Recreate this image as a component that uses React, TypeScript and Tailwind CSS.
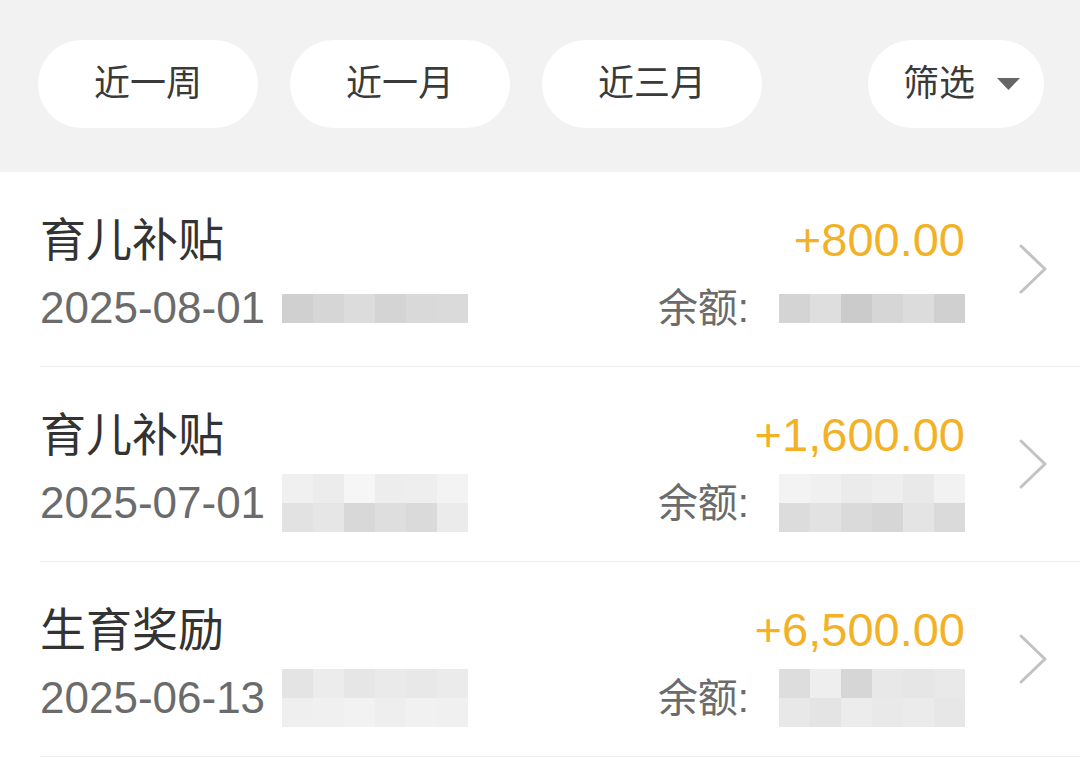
import React from 'react';

type Record = {
    title: string;
    date: string;
    amount: string;
    dateMosaic: string[][];
    balanceMosaic: string[][];
};

const records: Record[] = [
    {
        title: '育儿补贴',
        date: '2025-08-01',
        amount: '+800.00',
        dateMosaic: [['bg-[#d0d0d0]', 'bg-[#d6d6d6]', 'bg-[#dcdcdc]', 'bg-[#d4d4d4]', 'bg-[#d9d9d9]', 'bg-[#dadada]']],
        balanceMosaic: [['bg-[#d4d4d4]', 'bg-[#dedede]', 'bg-[#cbcbcb]', 'bg-[#d6d6d6]', 'bg-[#dcdcdc]', 'bg-[#d0d0d0]']],
    },
    {
        title: '育儿补贴',
        date: '2025-07-01',
        amount: '+1,600.00',
        dateMosaic: [
            ['bg-[#f0f0f0]', 'bg-[#ececec]', 'bg-[#f6f6f6]', 'bg-[#ededed]', 'bg-[#eeeeee]', 'bg-[#f3f3f3]'],
            ['bg-[#e2e2e2]', 'bg-[#e6e6e6]', 'bg-[#d8d8d8]', 'bg-[#dedede]', 'bg-[#dadada]', 'bg-[#ebebeb]'],
        ],
        balanceMosaic: [
            ['bg-[#f3f3f3]', 'bg-[#f0f0f0]', 'bg-[#ebebeb]', 'bg-[#eeeeee]', 'bg-[#e9e9e9]', 'bg-[#f2f2f2]'],
            ['bg-[#dcdcdc]', 'bg-[#e2e2e2]', 'bg-[#dadada]', 'bg-[#d6d6d6]', 'bg-[#e4e4e4]', 'bg-[#dadada]'],
        ],
    },
    {
        title: '生育奖励',
        date: '2025-06-13',
        amount: '+6,500.00',
        dateMosaic: [
            ['bg-[#e4e4e4]', 'bg-[#ececec]', 'bg-[#e6e6e6]', 'bg-[#eaeaea]', 'bg-[#e8e8e8]', 'bg-[#ebebeb]'],
            ['bg-[#efefef]', 'bg-[#f0f0f0]', 'bg-[#f2f2f2]', 'bg-[#eeeeee]', 'bg-[#f1f1f1]', 'bg-[#f0f0f0]'],
        ],
        balanceMosaic: [
            ['bg-[#dddddd]', 'bg-[#eeeeee]', 'bg-[#d6d6d6]', 'bg-[#e8e8e8]', 'bg-[#e6e6e6]', 'bg-[#e9e9e9]'],
            ['bg-[#e8e8e8]', 'bg-[#e4e4e4]', 'bg-[#ececec]', 'bg-[#e9e9e9]', 'bg-[#ebebeb]', 'bg-[#e7e7e7]'],
        ],
    },
];

function Mosaic({ rows }: { rows: string[][] }) {
    // privacy blur, drawn as pixel blocks
    return (
        <div className="flex flex-col blur-[0.6px]">
            {rows.map((row, i) => (
                <div key={i} className="flex">
                    {row.map((c, j) => (
                        <div key={j} className={`h-[29px] w-[31px] ${c}`} />
                    ))}
                </div>
            ))}
        </div>
    );
}

function Pill({ label }: { label: string }) {
    return (
        <div className="flex h-[88px] w-[220px] items-center justify-center rounded-full bg-white text-[36px] text-[#3a3a3a]">
            {label}
        </div>
    );
}

export default function App() {
    return (
        <div
            className="h-[758px] w-[1080px] overflow-hidden bg-white"
            style={{ fontFamily: '"Liberation Sans", "Noto Sans CJK SC", sans-serif' }}
        >
            {/* Filter bar */}
            <div className="flex h-[172px] items-start bg-[#f2f2f2] pl-[38px] pr-[36px] pt-[40px]">
                <div className="flex gap-[32px]">
                    <Pill label="近一周" />
                    <Pill label="近一月" />
                    <Pill label="近三月" />
                </div>
                <div className="ml-auto flex h-[88px] items-center rounded-full bg-white pl-[35px] pr-[24px] text-[36px] text-[#3a3a3a]">
                    <span>筛选</span>
                    <svg width="23" height="12" viewBox="0 0 23 12" className="ml-[22px]">
                        <polygon points="0,0 23,0 11.5,12" fill="#666666" />
                    </svg>
                </div>
            </div>

            {/* Records */}
            <div className="pl-[40px]">
                {records.map((r, i) => (
                    <div key={i} className="flex h-[195px] items-center border-b border-[#eeeeee] pr-[32px]">
                        <div className="flex flex-col self-start pt-[40px]">
                            <div className="text-[46px] leading-[56px] text-[#333333]">{r.title}</div>
                            <div className="mt-[12px] flex h-[56px] items-center">
                                <span className="text-[44px] leading-[56px] text-[#6b6b6b]">{r.date}</span>
                                <div className="ml-[17px]">
                                    <Mosaic rows={r.dateMosaic} />
                                </div>
                            </div>
                        </div>
                        <div className="ml-auto flex flex-col items-end self-start pt-[40px]">
                            <div className="text-[47px] leading-[56px] text-[#f3b125]">{r.amount}</div>
                            <div className="mt-[12px] flex h-[56px] items-center">
                                <span className="text-[40px] leading-[56px] text-[#6b6b6b]">余额:</span>
                                <div className="ml-[30px]">
                                    <Mosaic rows={r.balanceMosaic} />
                                </div>
                            </div>
                        </div>
                        <svg width="30" height="52" viewBox="0 0 30 52" className="ml-[53px] shrink-0">
                            <polyline
                                points="3,3 27,26 3,49"
                                fill="none"
                                stroke="#c2c2c2"
                                strokeWidth="3"
                                strokeLinecap="round"
                                strokeLinejoin="round"
                            />
                        </svg>
                    </div>
                ))}
            </div>
        </div>
    );
}
